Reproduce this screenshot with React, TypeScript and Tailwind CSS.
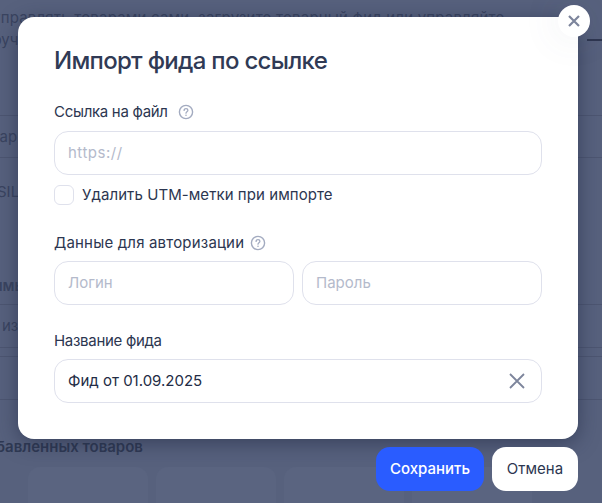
import React from 'react';

const Help = () => (
  <svg width="16" height="16" viewBox="0 0 16 16" fill="none" className="shrink-0">
    <circle cx="8" cy="8" r="6.6" stroke="#a3abc0" strokeWidth="1.4" />
    <path d="M6.1 6.4c0-1.1.9-1.8 1.9-1.8s1.9.7 1.9 1.7c0 1.5-1.9 1.5-1.9 2.9" stroke="#a3abc0" strokeWidth="1.3" strokeLinecap="round" />
    <circle cx="8" cy="11.2" r=".8" fill="#a3abc0" />
  </svg>
);

const Field = ({ placeholder, value, wide }: { placeholder?: string; value?: string; wide?: boolean }) => (
  <div className="flex h-11 min-w-0 flex-1 items-center justify-between rounded-[14px] border border-[#dfe1ec] bg-white pl-[13px] pr-[15px] text-[15px]">
    {value ? (
      <span className="text-[#232c45]">{value}</span>
    ) : (
      <span className={wide ? 'tracking-[0.5px] text-[#b4bacb]' : 'text-[#b4bacb]'}>{placeholder}</span>
    )}
    {value && (
      <svg width="18" height="18" viewBox="0 0 18 18" fill="none">
        <path d="M2 2l14 14M16 2L2 16" stroke="#7d859c" strokeWidth="1.8" />
      </svg>
    )}
  </div>
);

const App: React.FC = () => {
  return (
    <div className="relative h-[503px] w-[602px] overflow-hidden bg-[#57617d] font-['Inter',sans-serif] text-[15px] text-[#2c3650]">
      {/* page under the overlay */}
      <div className="flex flex-col text-[#3a4460]">
        <div className="h-[7px]" />
        <p className="-ml-[8px] whitespace-nowrap leading-[22px] tracking-[0.2px]">управлять товарами сами, загрузите товарный фид или управляйте</p>
        <div className="flex items-center justify-between">
          <p className="-ml-[16px] leading-[22px]">вручную</p>
          <div className="h-[2px] w-[15px] bg-[#2e3650]" />
        </div>
        <div className="mt-[64px] border-t border-[#4d5671]" />
        <div className="-ml-[14px] h-[41px] pt-[10px] leading-[22px]">Маркет</div>
        <div className="border-t border-[#4d5671]" />
        <div className="h-[146px] pt-[23px]">
          <div className="-ml-[3px] leading-[22px]">SILVER</div>
          <div className="-ml-[72px] mt-[72px] font-semibold leading-[22px]">Необходимы</div>
        </div>
        <div className="border-t border-[#4d5671]" />
        <div className="h-[42px] pl-[2px] pt-[10px] leading-[22px]">из</div>
        <div className="border-t border-[#4d5671]" />
        <div className="mt-[8px] border-t border-[#4d5671]" />
        <div className="mt-[42px] border-t border-[#4d5671]" />
        <div className="-ml-[23px] mt-[36px] whitespace-nowrap font-semibold leading-[22px] text-[#2f3953]">добавленных товаров</div>
        <div className="mt-[9px] flex gap-2 pl-7">
          <div className="h-24 w-[120px] shrink-0 rounded-xl bg-[#5a6480]" />
          <div className="h-24 w-[120px] shrink-0 rounded-xl bg-[#5a6480]" />
          <div className="h-24 w-[120px] shrink-0 rounded-xl bg-[#5a6480]" />
          <div className="h-24 w-[120px] shrink-0 rounded-xl bg-[#5a6480]" />
        </div>
      </div>

      {/* modal */}
      <div className="absolute left-[18px] top-[17px] w-[560px]">
        <div className="h-[422px] rounded-2xl bg-white px-9 pt-[28px] shadow-[0_4px_20px_rgba(30,38,65,0.55)]">
          <h1 className="text-2xl font-medium leading-8 tracking-[-0.7px] text-[#303a55]">Импорт фида по ссылке</h1>
          <div className="mt-[24px] flex items-center gap-[10px] leading-[22px] tracking-[-0.3px]">
            Ссылка на файл <Help />
          </div>
          <div className="mt-[8px] flex">
            <Field placeholder="https://" wide />
          </div>
          <label className="mt-[10px] flex items-center gap-2 leading-5 tracking-[0.07px]">
            <span className="h-5 w-5 rounded-md border border-[#dfe1ec] bg-white" />
            Удалить UTM-метки при импорте
          </label>
          <div className="mt-[27px] flex items-center gap-[6px] leading-[22px] tracking-[0.18px]">
            Данные для авторизации <Help />
          </div>
          <div className="mt-[7px] flex gap-2">
            <Field placeholder="Логин" />
            <Field placeholder="Пароль" />
          </div>
          <div className="mt-[25px] leading-[22px] tracking-[-0.3px]">Название фида</div>
          <div className="mt-[7px] flex">
            <Field value="Фид от 01.09.2025" />
          </div>
        </div>
        <div className="mt-2 flex justify-end gap-2">
          <button className="h-11 w-[108px] rounded-[14px] bg-[#2a5cff] text-[15px] font-medium text-white">Сохранить</button>
          <button className="h-11 w-[86px] rounded-[14px] bg-white text-[15px] text-[#2c3650]">Отмена</button>
        </div>
        <button className="absolute right-[-12px] top-[-12px] flex h-8 w-8 items-center justify-center rounded-full bg-white shadow-[0_0_40px_rgba(90,100,130,0.12)]">
          <svg width="12" height="12" viewBox="0 0 12 12" fill="none">
            <path d="M1 1l10 10M11 1L1 11" stroke="#7d859c" strokeWidth="2.2" />
          </svg>
        </button>
      </div>
    </div>
  );
};

export default App;
